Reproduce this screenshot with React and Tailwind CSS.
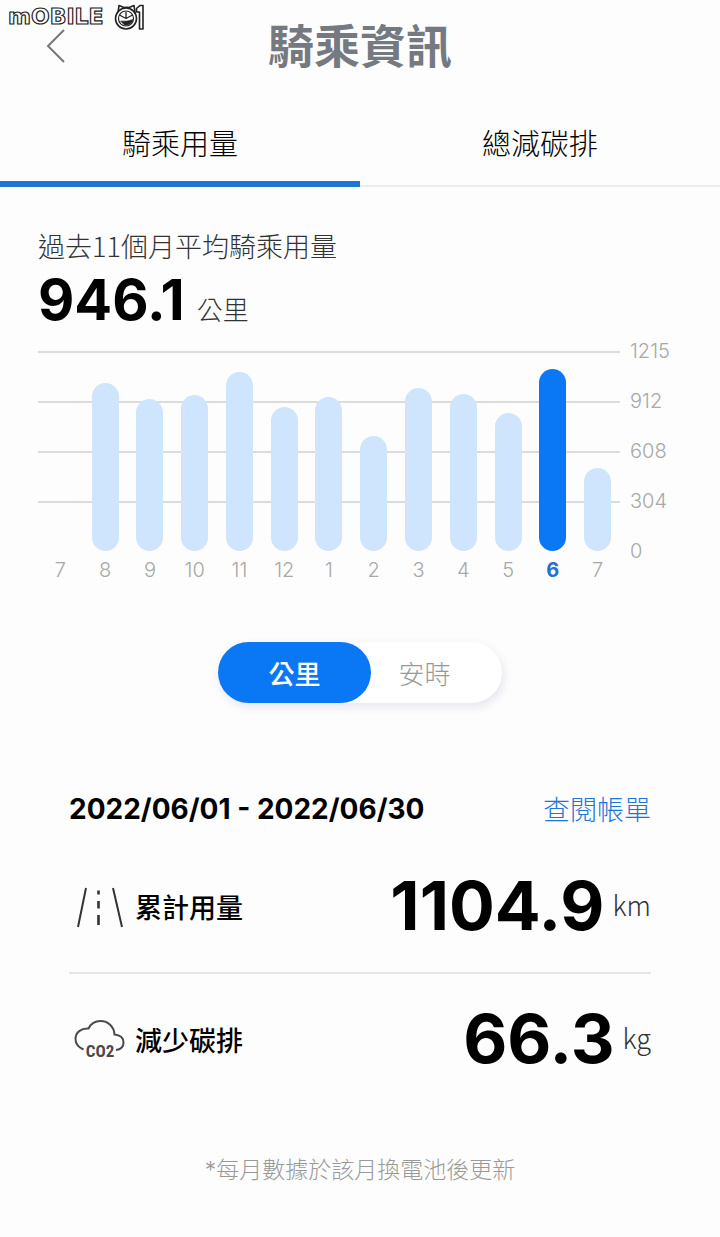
import React, { useState } from "react";

const months = [
  { id: "2021-07", label: "7", km: 0 },
  { id: "2021-08", label: "8", km: 1018 },
  { id: "2021-09", label: "9", km: 926 },
  { id: "2021-10", label: "10", km: 950 },
  { id: "2021-11", label: "11", km: 1085 },
  { id: "2021-12", label: "12", km: 874 },
  { id: "2022-01", label: "1", km: 934 },
  { id: "2022-02", label: "2", km: 700 },
  { id: "2022-03", label: "3", km: 988 },
  { id: "2022-04", label: "4", km: 956 },
  { id: "2022-05", label: "5", km: 840 },
  { id: "2022-06", label: "6", km: 1104.9 },
  { id: "2022-07", label: "7", km: 506 },
];
const scale = [1215, 912, 608, 304, 0];

function Watermark() {
  return (
    <svg className="absolute left-2 top-1 h-7 w-[138px]" viewBox="0 0 138 28" aria-label="MOBILE01">
      <text
        x="0"
        y="20"
        fontSize="22"
        fontWeight="700"
        fill="#fff"
        stroke="#222"
        strokeWidth="1.2"
        className="font-['DejaVu_Sans']"
      >
        mOBILE
      </text>
      <g fill="#fff" stroke="#222" strokeWidth="1.6" strokeLinejoin="round">
        <path d="M110 9 L111 1.500 L116 3.500 Q119 3 121 3.500 L126 1.500 L127 9" />
        <circle cx="118" cy="14.5" r="10.5" />
        <circle cx="118" cy="14.500" r="7.500" strokeWidth="1.200" />
        <path d="M111.500 11 L118 14.500 L124.500 11 M118 8 V14" fill="none" strokeWidth="1.300" />
        <path d="M112.500 17 Q119 18 125 15.500 Q122.500 22 116.500 21 Z" fill="#222" strokeWidth="0.6" />
        <path d="M128.500 4.500 L132 1.500 H135 V25 H131.500 V8 H128.500 Z" />
      </g>
    </svg>
  );
}

function RoadIcon() {
  return (
    <svg className="h-12 w-14" viewBox="0 0 56 48" fill="none" stroke="#333" strokeWidth="2" aria-hidden="true">
      <path d="M17 5 L9 44 M44 5 L53 44" />
      <path d="M29.5 7.5 V11.5 M29.5 18 V25.5 M29.5 32 V42" strokeWidth="2.6" />
    </svg>
  );
}

function CloudIcon() {
  return (
    <svg className="h-12 w-14" viewBox="0 0 56 48" fill="none" aria-hidden="true">
      <path
        d="M14.500 33.500 C9 31 6.500 27.500 6.500 23 C6.500 16.500 12 12 19.500 12.500 C22 7.500 26 5 31.500 5 C39 5 45 10.500 45.500 18.500 C51 19 54.500 22 54.500 26.500 C54.500 30.500 52 33.500 47 34"
        stroke="#4a4a4a"
        strokeWidth="2"
      />
      <text
        x="31"
        y="41"
        fontSize="17"
        fontWeight="700"
        textAnchor="middle"
        fill="#4a4a4a"
        className="font-['Liberation_Sans_Narrow','Roboto_Condensed',Roboto,sans-serif]"
      >
        CO2
      </text>
    </svg>
  );
}

function Chart() {
  return (
    <figure className="mt-[21px] flex pl-[38px] pr-10 text-[20px] font-light leading-6 text-[#a8a8a8]">
      <div className="min-w-0 flex-1">
        <div className="grid h-[200px]">
          <div className="col-start-1 row-start-1 flex flex-col">
            {scale.slice(0, 4).map((v) => (
              <div key={v} className="flex-1 border-t-2 border-[#dcdcdc]" />
            ))}
          </div>
          <div className="col-start-1 row-start-1 grid grid-cols-13 items-end justify-items-center">
            {months.map((m) => (
              <div
                key={m.id}
                className={`w-[27px] rounded-full ${m.label === "6" ? "bg-[#0a78f5]" : "bg-[#cfe5fd]"}`}
                style={{ height: `${(m.km / 1215) * 100}%` }}
              />
            ))}
          </div>
        </div>
        <div className="mt-[7px] grid grid-cols-13 text-center">
          {months.map((m) => (
            <span key={m.id} className={m.label === "6" ? "font-bold text-[#2270d0]" : ""}>
              {m.label}
            </span>
          ))}
        </div>
      </div>
      <div className="-mt-3 ml-[10px] flex h-[224px] w-[50px] flex-col justify-between">
        {scale.map((v) => (
          <span key={v}>{v}</span>
        ))}
      </div>
    </figure>
  );
}

function Stat({ icon, label, value, unit }) {
  return (
    <div className="flex items-center justify-between">
      <div className="flex items-center gap-[10px] pt-1">
        {icon}
        <span className="pt-1 text-[27px] font-medium leading-9">{label}</span>
      </div>
      <div className="flex items-center gap-2">
        <span className="text-[68px] font-bold leading-[72px]">{value}</span>
        <span className="font-['Noto_Sans_CJK_TC',sans-serif] text-[27px] font-light leading-9 text-[#333]">{unit}</span>
      </div>
    </div>
  );
}

export default function App() {
  const [tab, setTab] = useState(0);
  const [unit, setUnit] = useState(0);
  return (
    <main className="relative min-h-screen bg-[#fdfdfd] pb-12 font-[Inter,'Noto_Sans_CJK_TC',sans-serif] text-black">
      <Watermark />
      <header className="grid h-[92px] grid-cols-[80px_1fr_80px] items-center">
        <button type="button" aria-label="返回" className="flex justify-end pr-[14px]">
          <svg className="h-9 w-5" viewBox="0 0 20 36" fill="none" stroke="#777" strokeWidth="2">
            <path d="M18 2 L2 18 L18 34" />
          </svg>
        </button>
        <h1 className="text-center text-[46px] font-bold leading-[60px] text-[#747a80]">騎乘資訊</h1>
      </header>

      <nav className="grid grid-cols-2">
        {["騎乘用量", "總減碳排"].map((t, i) => (
          <button
            key={t}
            type="button"
            onClick={() => setTab(i)}
            className="flex h-[95px] flex-col justify-between pt-[33px] text-center text-[29px] font-light leading-10"
          >
            <span className="w-full">{t}</span>
            <span className={`block w-full ${tab === i ? "h-[6px] bg-[#1f74d8]" : "h-[2px] bg-[#ececee]"}`} />
          </button>
        ))}
      </nav>

      <section className="pt-[41px]">
        <h2 className="px-[38px] font-['Noto_Sans_CJK_TC',sans-serif] text-[27px] font-light leading-9 text-[#333]">
          過去11個月平均騎乘用量
        </h2>
        <p className="mt-[6px] flex items-baseline gap-3 px-[38px]">
          <span className="text-[56px] font-bold leading-[60px]">946.1</span>
          <span className="text-[26px] font-light leading-9 text-[#333]">公里</span>
        </p>
        <Chart />
        <div className="mx-auto mt-[60px] flex h-[61px] w-[284px] rounded-full bg-white shadow-[2px_4px_10px_rgba(60,60,140,0.12)]">
          {["公里", "安時"].map((u, i) => (
            <button
              key={u}
              type="button"
              onClick={() => setUnit(i)}
              className={`rounded-full pt-1 text-[26px] ${
                unit === i ? "w-[153px] bg-[#0a78f5] font-medium text-white" : "flex-1 pr-6 font-light text-[#999]"
              }`}
            >
              {u}
            </button>
          ))}
        </div>
      </section>

      <section className="mt-[88px] px-[69px]">
        <div className="flex items-center justify-between leading-9">
          <h2 className="text-[28px] font-bold">2022/06/01 - 2022/06/30</h2>
          <a href="#bill" className="pt-1 text-[27px] font-light leading-8 text-[#1f74d8]">
            查閱帳單
          </a>
        </div>
        <div className="mt-[42px]">
          <Stat icon={<RoadIcon />} label="累計用量" value="1104.9" unit="km" />
        </div>
        <hr className="mt-[31px] border-t-2 border-[#e6e6e6]" />
        <div className="mt-7">
          <Stat icon={<CloudIcon />} label="減少碳排" value="66.3" unit="kg" />
        </div>
      </section>

      <p className="mt-20 text-center text-[23px] font-light leading-8 text-[#999]">*每月數據於該月換電池後更新</p>
    </main>
  );
}
